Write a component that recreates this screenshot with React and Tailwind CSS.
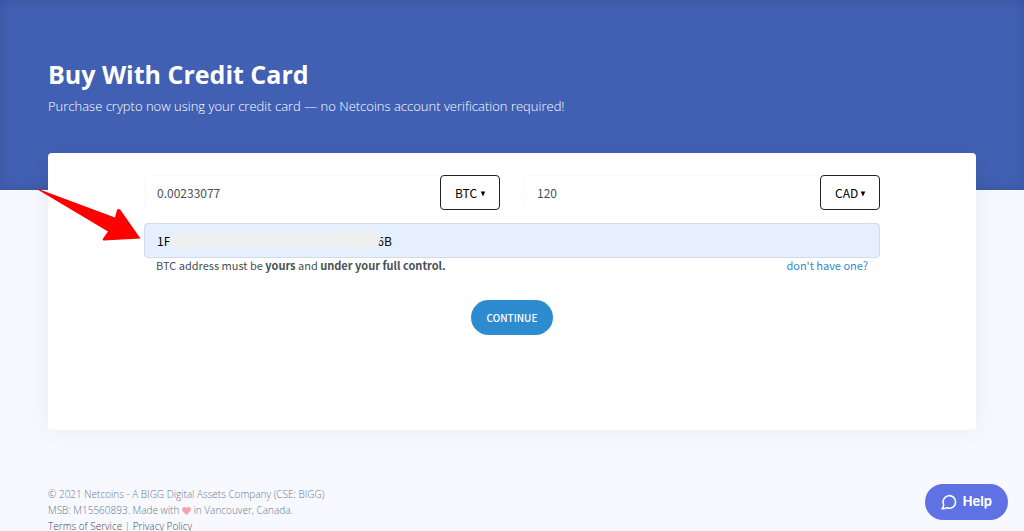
import { useState } from 'react';

const CURRENCIES = {
  crypto: ['BTC', 'ETH', 'LTC'],
  fiat: ['CAD', 'USD'],
};

function AmountField({ label, value, onChange, options }) {
  return (
    <div className="flex flex-1 min-w-0">
      <input
        type="text"
        aria-label={label}
        value={value}
        onChange={(e) => onChange(e.target.value)}
        className="flex-1 min-w-0 h-[35px] px-3 rounded-l border border-r-0 border-[#fafafb] text-[12px] leading-6 text-[#495057] outline-none"
      />
      <div className="relative">
        <select
          aria-label={`${label} currency`}
          className="appearance-none h-[35px] w-15 pl-3.5 pr-5 rounded border border-[#222222] bg-white text-[12px] leading-6 text-black"
        >
          {options.map((option) => (
            <option key={option}>{option}</option>
          ))}
        </select>
        <svg viewBox="0 0 6 6" className="absolute right-3.5 top-4 w-1.5 h-1.5 pointer-events-none">
          <path d="M0.8 0.5h4.4L3 5.5z" fill="#000" />
        </svg>
      </div>
    </div>
  );
}

export default function App() {
  const [crypto, setCrypto] = useState('0.00233077');
  const [fiat, setFiat] = useState('120');
  const [address, setAddress] = useState('1F' + '\u00a0'.repeat(77) + '6B');

  return (
    <div className="min-h-screen overflow-hidden bg-[#f8f9fe] font-['Open_Sans',sans-serif]">
      {/* Header */}
      <header className="px-12 pt-14 pb-[74px] bg-[#4160b3] text-white shadow-[inset_0_0_12px_rgba(50,60,110,0.35)]">
        <h1 className="text-[25px] leading-9 font-bold">Buy With Credit Card</h1>
        <p className="mt-1 text-[13px] leading-5 font-light text-white">
          Purchase crypto now using your credit card — no Netcoins account verification required!
        </p>
      </header>

      {/* Purchase form */}
      <main className="relative -mt-[37px] px-12">
        <form
          onSubmit={(e) => e.preventDefault()}
          className="px-24 pt-[22px] pb-[95px] rounded bg-white shadow-[0_0_26px_rgba(60,60,80,0.08)] font-['Noto_Sans_CJK_SC',sans-serif]"
        >
          <div className="flex gap-6">
            <AmountField label="Amount" value={crypto} onChange={setCrypto} options={CURRENCIES.crypto} />
            <AmountField label="Price" value={fiat} onChange={setFiat} options={CURRENCIES.fiat} />
          </div>

          <div className="relative mt-[13px]">
            <input
              type="text"
              aria-label="Wallet address"
              value={address}
              onChange={(e) => setAddress(e.target.value)}
              className="block w-full h-[35px] px-3 rounded border border-[#d3dbe6] bg-[#e6effd] text-[12px] leading-6 text-black outline-none"
            />
            {/* Smudge that hides the middle of the address */}
            <svg viewBox="0 0 214 20" className="absolute left-6 top-2 w-[214px] h-5 pointer-events-none">
              <path
                d="M2 5Q5 1 14 1.500L60 2 104 3 140 2 176 .5 205 0Q213 1 213 6L210 15Q207 18 200 17.500L150 17 100 15.500 50 16 22 16Q13 20 7 16 0 14 2 5z"
                fill="#efefef"
              />
            </svg>
            {/* Arrow pointing at the address field */}
            <svg viewBox="0 0 104 52" className="absolute right-full bottom-full mr-[3px] -mb-[18px] w-[104px] h-[52px] pointer-events-none">
              <path d="M0.500 0.500Q1.500 0 4 1L78 28.500 80 21Q81.500 19 83.500 21L103.500 49.500 66.500 51.500Q65 51 66 49.500L71 42.500z" fill="#fe0000" />
            </svg>
          </div>

          <div className="flex justify-between px-3 text-[11px] leading-[14px] text-[#495057]">
            <p>
              BTC address must be <b>yours</b> and <b>under your full control.</b>
            </p>
            <a href="#wallet" className="text-[#2d8bcf]">don't have one?</a>
          </div>

          <div className="flex justify-center mt-7">
            <button type="submit" className="h-[35px] px-4 rounded-full bg-[#2d8bcf] text-[10px] font-medium text-white">
              CONTINUE
            </button>
          </div>
        </form>
      </main>

      {/* Footer */}
      <footer className="px-12 pt-14 text-[10px] leading-4 font-light text-[#66788f]">
        <p>© 2021 Netcoins - A BIGG Digital Assets Company (CSE: BIGG)</p>
        <p>
          MSB: M15560893. Made with{' '}
          <svg viewBox="0 0 20 18" className="inline w-[9px] h-2" aria-label="love">
            <path d="M10 18L1.800 9.800C-.8 7-.5 3 2 1.200 4.500-.6 8 0 10 3 12-.0 15.500-.6 18 1.200 20.500 3 20.800 7 18.200 9.800z" fill="#f5a0b4" />
          </svg>{' '}
          in Vancouver, Canada.
        </p>
        <p>
          <a href="#terms" className="text-[#3f4857]">Terms of Service</a> |{' '}
          <a href="#privacy" className="text-[#3f4857]">Privacy Policy</a>
        </p>
      </footer>

      {/* Help widget */}
      <button
        type="button"
        className="fixed right-4 bottom-[11px] h-9 px-4 flex items-center gap-1.5 rounded-full bg-[#5e72e4] text-[13px] font-bold text-white font-[Inter,sans-serif]"
      >
        <svg viewBox="0 0 16 16" className="w-4 h-4" fill="none" stroke="currentColor" strokeWidth="1.600" strokeLinejoin="round" strokeLinecap="round">
          <path d="M2.600 10.600A6.300 6.300 0 1 1 6 13.800Q4 14.900 1 14.800 2.800 13 2.600 10.600z" />
        </svg>
        Help
      </button>
    </div>
  );
}
